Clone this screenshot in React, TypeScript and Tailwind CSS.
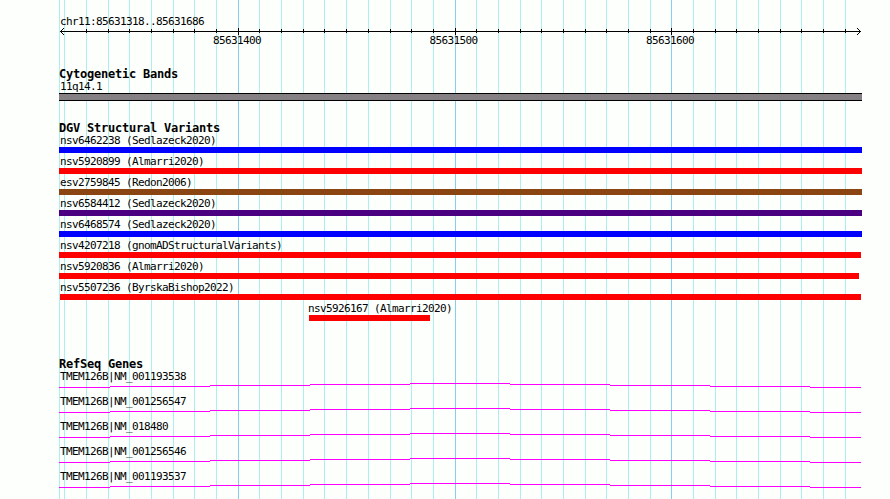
const GRID = [
  59, 64, 86, 108, 129, 151, 173, 194, 216, 238, 259, 281, 303, 324, 346, 368, 390, 411, 433, 455,
  476, 498, 520, 541, 563, 585, 606, 628, 650, 671, 693, 715, 736, 758, 780, 801, 823, 845,
];
const MAJOR = [238, 455, 671];

const variants = [
  { name: "nsv6462238 (Sedlazeck2020)", color: "bg-[#0000ff]", start: 59, end: 862 },
  { name: "nsv5920899 (Almarri2020)", color: "bg-[#ff0000]", start: 59, end: 862 },
  { name: "esv2759845 (Redon2006)", color: "bg-[#8b4513]", start: 59, end: 862 },
  { name: "nsv6584412 (Sedlazeck2020)", color: "bg-[#4b0082]", start: 59, end: 862 },
  { name: "nsv6468574 (Sedlazeck2020)", color: "bg-[#0000ff]", start: 59, end: 862 },
  { name: "nsv4207218 (gnomADStructuralVariants)", color: "bg-[#ff0000]", start: 59, end: 861 },
  { name: "nsv5920836 (Almarri2020)", color: "bg-[#ff0000]", start: 59, end: 859 },
  { name: "nsv5507236 (ByrskaBishop2022)", color: "bg-[#ff0000]", start: 60, end: 861 },
  { name: "nsv5926167 (Almarri2020)", color: "bg-[#ff0000]", start: 309, end: 430 },
];

const genes = [
  "TMEM126B|NM_001193538",
  "TMEM126B|NM_001256547",
  "TMEM126B|NM_018480",
  "TMEM126B|NM_001256546",
  "TMEM126B|NM_001193537",
];

export default function App() {
  return (
    <div className="relative w-[890px] h-[499px] overflow-hidden bg-[#fcfffc] text-black whitespace-pre font-['DejaVu_Sans_Mono',monospace] text-[11px] tracking-[-0.622px]">
      <GridLines />

      <main className="relative flex flex-col">
        <Ruler />

        {/* Cytogenetic Bands */}
        <section className="pt-[18px] h-[72px]">
          <Heading label="Cytogenetic Bands" />
          <div className="h-[15px] pl-[60px] leading-[17px]">11q14.1</div>
          <div className="ml-[59px] w-[803px] h-2 bg-[#848084] border-y border-black" />
        </section>

        {/* DGV Structural Variants */}
        <section>
          <Heading label="DGV Structural Variants" />
          {variants.map((v) => (
            <Variant key={v.name} {...v} />
          ))}
        </section>

        {/* RefSeq Genes */}
        <section className="pt-[37px]">
          <Heading label="RefSeq Genes" />
          {genes.map((name) => (
            <Gene key={name} name={name} />
          ))}
        </section>
      </main>
    </div>
  );
}

function GridLines() {
  return (
    <svg className="absolute inset-0" width="890" height="499" shapeRendering="crispEdges">
      {GRID.map((x) => (
        <rect key={x} x={x} y="0" width="1" height="499" fill={MAJOR.includes(x) ? "#87ceeb" : "#afeeee"} />
      ))}
    </svg>
  );
}

function Heading({ label }: { label: string }) {
  return (
    <h2 className="h-[10px] pl-[59px] font-bold text-[12px] leading-[13px] tracking-[-0.224px]">{label}</h2>
  );
}

function Ruler() {
  return (
    <header className="h-[50px] pt-[13px]">
      <div className="h-[15px] pl-[60px] leading-[17px]">chr11:85631318..85631686</div>
      <svg className="block" width="890" height="7" shapeRendering="crispEdges">
        <rect x="60" y="3" width="801" height="1" />
        {GRID.slice(2).map((x) =>
          MAJOR.includes(x) ? (
            <rect key={x} x={x} y="0" width="1" height="7" />
          ) : (
            <rect key={x} x={x} y="1" width="1" height="4" />
          )
        )}
        <path d="M61 2h1v1h-1zM62 1h1v1h-1zM63 0h1v1h-1zM61 4h1v1h-1zM62 5h1v1h-1zM63 6h1v1h-1z" />
        <path d="M859 2h1v1h-1zM858 1h1v1h-1zM857 0h1v1h-1zM859 4h1v1h-1zM858 5h1v1h-1zM857 6h1v1h-1z" />
      </svg>
      <div className="ml-[213px] w-[481px] flex justify-between leading-[11px]">
        <span>85631400</span>
        <span>85631500</span>
        <span>85631600</span>
      </div>
    </header>
  );
}

function Variant({ name, color, start, end }: { name: string; color: string; start: number; end: number }) {
  // labels start on the 60px margin, or a pixel left of a bar further in
  const labelStart = start > 60 ? start - 1 : 60;
  return (
    <div>
      <div className="h-[15px] leading-[17px]" style={{ paddingLeft: labelStart }}>
        {name}
      </div>
      <div className={`h-[6px] ${color}`} style={{ marginLeft: start, width: end - start }} />
    </div>
  );
}

function Gene({ name }: { name: string }) {
  return (
    <div className="h-[25px]">
      <div className="h-[15px] pl-[60px] leading-[17px]">{name}</div>
      <svg className="block" width="890" height="5" fill="#ff00ff" shapeRendering="crispEdges">
        <rect x="59" y="4" width="51" height="1" />
        <rect x="110" y="3" width="100" height="1" />
        <rect x="210" y="2" width="100" height="1" />
        <rect x="310" y="1" width="100" height="1" />
        <rect x="410" y="0" width="100" height="1" />
        <rect x="510" y="1" width="100" height="1" />
        <rect x="610" y="2" width="100" height="1" />
        <rect x="710" y="3" width="100" height="1" />
        <rect x="810" y="4" width="51" height="1" />
      </svg>
    </div>
  );
}
